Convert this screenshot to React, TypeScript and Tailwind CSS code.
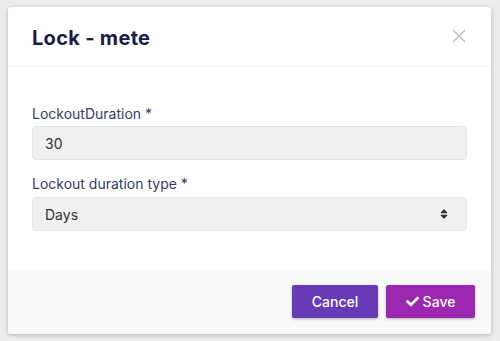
import React from "react";
import { FaCheck, FaSort } from "react-icons/fa";

export default function App() {
  return (
    <div
      className="w-[500px] h-[341px] bg-[#ececec] overflow-hidden pt-[7px] pl-[8px]"
      style={{ fontFamily: "Inter, 'Open Sans', sans-serif" }}
    >
      <div className="w-[483px] h-[327px] bg-white rounded-[3px] shadow-[0_1px_4px_rgba(0,0,0,0.25)] flex flex-col overflow-hidden">
        <div className="h-[60px] border-b border-[#f2f2f2] flex items-center justify-between pl-[24px] pr-[24px]">
          <h1 className="text-[20px] font-bold text-[#171c4d] tracking-[0.3px] mt-[2px]">Lock - mete</h1>
          <svg width="14" height="14" viewBox="0 0 14 14" className="mt-[-2px] mr-[1px]">
            <path d="M1 1 L13 13 M13 1 L1 13" stroke="#b9b9b9" strokeWidth="1.2" />
          </svg>
        </div>
        <div className="flex-1 px-[24px] pt-[37px]">
          <label className="block text-[14px] text-[#353b6e] leading-[20px]">LockoutDuration *</label>
          <div className="mt-[2px] h-[34px] bg-[#f0f0f0] border border-[#e6e6e6] rounded-[4px] flex items-center px-[12px] text-[14px] text-[#333]">
            30
          </div>
          <label className="block mt-[14px] text-[14px] text-[#353b6e] leading-[20px]">Lockout duration type *</label>
          <div className="mt-[3px] h-[34px] bg-[#f0f0f0] border border-[#e6e6e6] rounded-[4px] flex items-center justify-between px-[12px] text-[14px] text-[#333]">
            <span>Days</span>
            <FaSort className="text-[#333] w-[10px] h-[12px] mr-[5px]" />
          </div>
        </div>
        <div className="h-[64px] bg-[#fafafa] flex items-start justify-end gap-[8px] pr-[16px] pt-[15px]">
          <button className="w-[86px] h-[33px] bg-[#673ab7] text-white text-[14px] font-medium rounded-[2px] shadow-[0_1px_3px_rgba(0,0,0,0.3)]">
            Cancel
          </button>
          <button className="w-[89px] h-[33px] bg-[#9c27b0] text-white text-[14px] font-medium rounded-[2px] shadow-[0_1px_3px_rgba(0,0,0,0.3)] flex items-center justify-center gap-[4px]">
            <FaCheck className="w-[13px] h-[13px]" />
            Save
          </button>
        </div>
      </div>
    </div>
  );
}
